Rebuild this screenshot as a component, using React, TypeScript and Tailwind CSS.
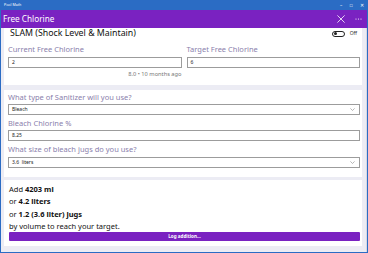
import React from 'react';

const font = { fontFamily: '"Noto Sans", "Open Sans", sans-serif' };

const Label: React.FC<{ children: React.ReactNode }> = ({ children }) => (
  <div className="h-[10px] flex items-center text-[7.5px] leading-none text-[#8a80ac] whitespace-nowrap">{children}</div>
);

const Field: React.FC<{ value: string; select?: boolean }> = ({ value, select }) => (
  <div className="h-[11px] border border-[#9c9c9c] bg-white flex items-center justify-between px-[3px]">
    <span className="text-[5px] leading-none text-[#222] whitespace-pre">{value}</span>
    {select && (
      <svg width="5" height="3" viewBox="0 0 5 3" className="mr-[1px]">
        <path d="M0.4 0.4 L2.5 2.5 L4.6 0.4" fill="none" stroke="#999" strokeWidth="0.7" />
      </svg>
    )}
  </div>
);

export default function App() {
  return (
    <div className="w-[368px] h-[253px] overflow-hidden flex flex-col bg-[#2b6cc4]" style={font}>
      {/* window title bar */}
      <div className="h-[10px] flex items-center justify-between pl-[4px] text-white">
        <span className="text-[3.6px] leading-none">Pool Math</span>
        <div className="flex items-center text-[4.5px] leading-none">
          <span className="w-[10px] text-center">–</span>
          <span className="w-[10px] text-center">□</span>
          <span className="w-[12px] text-center">✕</span>
        </div>
      </div>
      <div className="flex-1 flex flex-col ml-[1px] mr-[1px] mb-[1px] bg-[#ececf4]">
        {/* app header */}
        <div className="h-[18px] bg-[#7a22c1] flex items-center justify-between pl-[2px] pr-[5px] text-white">
          <span className="text-[8.2px] leading-none">Free Chlorine</span>
          <div className="flex items-center gap-[10px]">
            <svg width="8" height="8" viewBox="0 0 8 8">
              <path d="M0.4 0.4 L7.6 7.6 M7.6 0.4 L0.4 7.6" stroke="white" strokeWidth="0.8" />
            </svg>
            <svg width="7" height="2" viewBox="0 0 7 2">
              <circle cx="1" cy="1" r="0.6" fill="white" />
              <circle cx="3.5" cy="1" r="0.6" fill="white" />
              <circle cx="6" cy="1" r="0.6" fill="white" />
            </svg>
          </div>
        </div>

        <div className="flex-1 flex flex-col pl-[3px] pr-[4px] border-r border-[#d8d8e2]">
          {/* SLAM card */}
          <div className="h-[57px] bg-white pl-[4px] pr-[2px] flex flex-col">
            <div className="h-[11px] flex items-center justify-between">
              <span className="text-[8.8px] leading-none text-[#111] pl-[2px]">SLAM (Shock Level &amp; Maintain)</span>
              <div className="flex items-center gap-[5px] mr-[3px]">
                <div className="w-[13px] h-[6px] rounded-full border border-[#222] flex items-center px-[1px]">
                  <div className="w-[3px] h-[3px] rounded-full bg-[#222]" />
                </div>
                <span className="text-[5px] leading-none text-[#333]">Off</span>
              </div>
            </div>
            <div className="grid grid-cols-2 gap-[5px] mt-[6px]">
              <div className="flex flex-col">
                <Label>Current Free Chlorine</Label>
                <div className="mt-[2px]"><Field value="2" /></div>
                <div className="mt-[3px] h-[8px] flex items-center justify-end text-[5.7px] leading-none text-[#777]">8.0 • 10 months ago</div>
              </div>
              <div className="flex flex-col">
                <Label>Target Free Chlorine</Label>
                <div className="mt-[2px]"><Field value="6" /></div>
              </div>
            </div>
          </div>

          {/* Sanitizer card */}
          <div className="h-[87px] mt-[5px] bg-white pl-[4px] pr-[2px] pt-[3px] flex flex-col">
            <Label>What type of Sanitizer will you use?</Label>
            <div className="mt-[1px]"><Field value="Bleach" select /></div>
            <div className="mt-[4px]"><Label>Bleach Chlorine %</Label></div>
            <div className="mt-[1px]"><Field value="8.25" /></div>
            <div className="mt-[4px]"><Label>What size of bleach jugs do you use?</Label></div>
            <div className="mt-[2px]"><Field value="3.6  liters" select /></div>
          </div>

          {/* Result card */}
          <div className="h-[66px] mt-[3px] bg-white pl-[5px] pr-[2px] pt-[3px] flex flex-col text-[7.5px] leading-[12.3px] text-[#111]">
            <div>Add <b>4203 ml</b></div>
            <div>or <b>4.2 liters</b></div>
            <div>or <b>1.2 (3.6 liter) jugs</b></div>
            <div>by volume to reach your target.</div>
            <div className="h-[9px] rounded-[1px] bg-[#7a22c1] flex items-center justify-center">
              <span className="text-[4.6px] font-bold text-white leading-none">Log addition...</span>
            </div>
          </div>
        </div>
      </div>
    </div>
  );
}
